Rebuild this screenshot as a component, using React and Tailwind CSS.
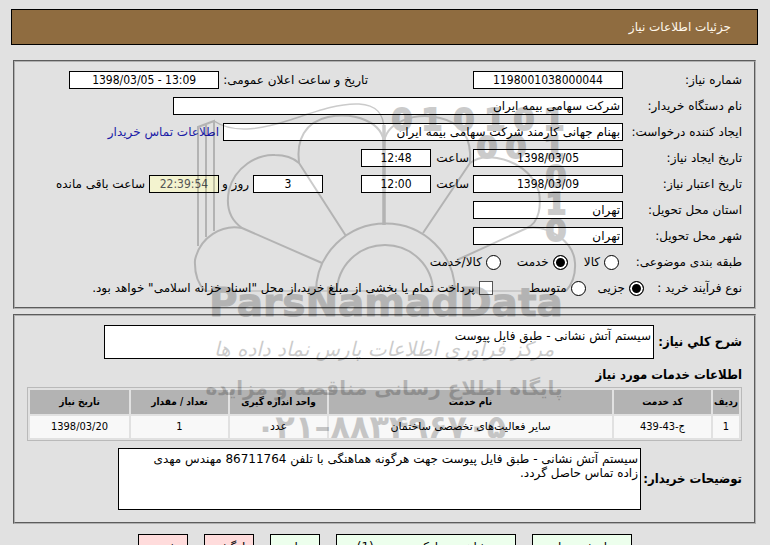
const sans = "font-['DejaVu_Sans',sans-serif]";
const condensed = "font-['DejaVu_Sans_Condensed','DejaVu_Sans',sans-serif]";

const Field = ({ id, value, className }) => (
  <input
    id={id}
    readOnly
    defaultValue={value}
    className={`h-[18px] border border-black px-0.5 ${className}`}
  />
);

// Centered field for numbers, dates and times
const NumberField = ({ id, value, className = "w-[70px] bg-white" }) => (
  <Field id={id} value={value} className={`text-center [direction:ltr] ${condensed} ${className}`} />
);

const Row = ({ id, label, children }) => (
  <div className="flex h-[18px] items-center">
    <label htmlFor={id} className="w-[119px] shrink-0 whitespace-nowrap">
      {label}
    </label>
    <div className="flex items-center gap-1 whitespace-nowrap">{children}</div>
  </div>
);

const Radio = ({ name, label, checked }) => (
  <label className="flex items-center gap-1">
    <input
      type="radio"
      name={name}
      defaultChecked={checked}
      className="size-[15px] appearance-none rounded-full border border-black bg-white checked:bg-black checked:ring-2 checked:ring-white checked:ring-inset"
    />
    {label}
  </label>
);

const services = [
  {
    row: "1",
    code: "ج-43-439",
    name: "سایر فعالیت‌های تخصصی ساختمان",
    unit: "عدد",
    count: "1",
    date: "1398/03/20",
  },
];

const actions = [
  { label: "پاسخ به نیاز", className: "w-[100px] bg-[#edffed]" },
  { label: "مشاهده مدارک پیوستی (1)", className: "w-[180px] bg-[#edffed]" },
  { label: "چاپ", className: "w-[50px] bg-[#edffed]" },
  { label: "بازگشت", className: "w-[50px] bg-[#ffdcdc]" },
  { label: "خروج", className: "w-[50px] bg-[#ffdcdc]" },
];

// Faint brand mark that lies over the whole form
const Watermark = () => (
  <svg
    viewBox="0 0 770 545"
    aria-hidden="true"
    className="pointer-events-none absolute top-0 left-1/2 h-[545px] w-[770px] -translate-x-1/2 opacity-20"
  >
    <g fill="none" stroke="black" strokeWidth="2">
      <path d="M316 292 A69 68 0 0 1 455 292" />
      <path d="M337 292 A48 47 0 0 1 433 292" />
      <path strokeWidth="3.5" d="M384 225 V125" />
      <path d="M346 236 L299 163 C296 140 305 122 328 117 C355 112 384 122 384 145" />
      <path d="M423 233 L470 163 C472 138 462 123 440 118 C415 112 384 122 384 145" />
      <path d="M322 263 L242 228 C229 219 226 205 229 190 C235 167 257 154 275 155 Q290 155 299 163" />
      <path d="M457 260 L527 228 C540 222 541 205 539 192 C533 172 515 161 497 158 Q480 155 470 163" />
      <path d="M242 228 C222 224 200 237 195 260 Q194 280 205 291" />
      <path d="M527 228 C548 225 574 241 575 263 Q576 280 566 291" />
      <path strokeWidth="1" d="M205 291 H566" />
      <path d="M198 246 V127 L214 121 V231 M206 237 V124" />
      <path strokeWidth="1.5" d="M214 121 C235 135 265 128 290 120 C320 110 340 103 359 104 C376 105 384 113 384 130" />
    </g>
    <g
      fill="black"
      stroke="black"
      strokeWidth="2"
      textAnchor="middle"
      className="font-['DejaVu_Sans',sans-serif] text-[30px] font-bold"
    >
      <text x="402" y="130">0</text>
      <text x="432" y="130">1</text>
      <text x="464" y="130">0</text>
      <text x="495" y="130">1</text>
      <text x="524" y="130">0</text>
      <text x="554" y="130">1</text>
      <text x="487" y="158">0</text>
      <text x="516" y="158">0</text>
      <text x="554" y="158">1</text>
      <text x="556" y="187">0</text>
      <text x="556" y="214">1</text>
      <text x="556" y="241">0</text>
    </g>
    <g fill="black" textAnchor="middle">
      <text
        x="386"
        y="316"
        stroke="black"
        strokeWidth="1"
        className="font-['DejaVu_Sans',sans-serif] text-[39px] font-bold"
      >
        ParsNamadData
      </text>
      <text x="384" y="356" direction="rtl" className="font-['DejaVu_Sans',sans-serif] text-[20px] italic">
        مرکز فرآوری اطلاعات پارس نماد داده ها
      </text>
      <text x="384" y="395" direction="rtl" className="font-['DejaVu_Sans',sans-serif] text-[20px] font-bold">
        پایگاه اطلاع رسانی مناقصه و مزایده
      </text>
      <text
        x="381"
        y="438"
        className="font-['DejaVu_Sans',sans-serif] text-[32px] font-bold [direction:ltr]"
      >
        ۰۲۱–۸۸۳۴۹۶۷۰۵
      </text>
    </g>
  </svg>
);

const App = () => {
  return (
    <div
      dir="rtl"
      className={`relative h-screen overflow-hidden bg-[#e1e1e1] pt-[9px] pr-3 pl-[11px] text-[12px] leading-[14px] text-black ${sans}`}
    >
      <h1 className="flex h-9 items-center border border-black bg-[#8f6c40] px-[26px] text-[#fff8ec]">
        جزئیات اطلاعات نیاز
      </h1>

      {/* Request details */}
      <fieldset className="mx-0.5 mt-[15px] flex flex-col gap-2 border-2 border-[#b0b0b0] px-3 pt-[9px] pb-2.5 [border-style:groove]">
        <Row id="number" label="شماره نیاز:">
          <NumberField id="number" value="1198001038000044" className="w-[150px] bg-white" />
          <label htmlFor="announced" className="mr-[101px]">
            تاریخ و ساعت اعلان عمومی:
          </label>
          <NumberField id="announced" value="1398/03/05 - 13:09" className="w-[150px] bg-white" />
        </Row>
        <Row id="buyer" label="نام دستگاه خریدار:">
          <Field id="buyer" value="شرکت سهامی بیمه ایران" className="w-[450px] bg-white" />
        </Row>
        <Row id="creator" label="ایجاد کننده درخواست:">
          <Field id="creator" value="بهنام جهانی کارمند شرکت سهامی بیمه ایران" className="w-[400px] bg-white" />
          <a href="#contact" className="text-[#1a1aa6]">
            اطلاعات تماس خریدار
          </a>
        </Row>
        <Row id="created" label="تاریخ ایجاد نیاز:">
          <NumberField id="created" value="1398/03/05" className="w-[150px] bg-white" />
          <label htmlFor="createdTime" className="w-[34px]">
            ساعت
          </label>
          <NumberField id="createdTime" value="12:48" />
        </Row>
        <Row id="expires" label="تاریخ اعتبار نیاز:">
          <NumberField id="expires" value="1398/03/09" className="w-[150px] bg-white" />
          <label htmlFor="expiresTime" className="w-[34px]">
            ساعت
          </label>
          <NumberField id="expiresTime" value="12:00" />
          <NumberField id="days" value="3" className="mr-[34px] w-[70px] bg-white" />
          <label htmlFor="days" className="w-[26px]">
            روز و
          </label>
          <NumberField id="remaining" value="22:39:54" className="w-[70px] bg-[#f3f3cf] text-[#555]" />
          <label htmlFor="remaining">ساعت باقی مانده</label>
        </Row>
        <Row id="province" label="استان محل تحویل:">
          <Field id="province" value="تهران" className="w-[150px] bg-white" />
        </Row>
        <Row id="city" label="شهر محل تحویل:">
          <Field id="city" value="تهران" className="w-[150px] bg-white" />
        </Row>
        <div className="flex h-[18px] items-center whitespace-nowrap">
          <span className="w-[123px] shrink-0">طبقه بندی موضوعی:</span>
          <div className="flex gap-4">
            <Radio name="category" label="کالا" />
            <Radio name="category" label="خدمت" checked />
            <Radio name="category" label="کالا/خدمت" />
          </div>
        </div>
        <div className="flex h-[18px] items-center whitespace-nowrap">
          <span className="w-[98px] shrink-0">نوع فرآیند خرید :</span>
          <div className="flex gap-3">
            <Radio name="process" label="جزیی" checked />
            <Radio name="process" label="متوسط" />
          </div>
          <label className="mr-9 flex items-center gap-1">
            <input type="checkbox" className="size-3.5 appearance-none border border-[#555] bg-white" />
            پرداخت تمام یا بخشی از مبلغ خرید،از محل "اسناد خزانه اسلامی" خواهد بود.
          </label>
        </div>
      </fieldset>

      {/* Services and notes */}
      <fieldset className="mx-0.5 mt-[5px] border-2 border-[#b0b0b0] px-3 pt-[9px] pb-3 [border-style:groove]">
        <div className="flex items-center gap-1">
          <label
            htmlFor="summary"
            className={`w-[84px] shrink-0 text-[13px] font-bold whitespace-nowrap ${condensed}`}
          >
            شرح كلي نياز:
          </label>
          <textarea
            id="summary"
            readOnly
            defaultValue="سیستم آتش نشانی - طبق فایل پیوست"
            className="h-[34px] w-[550px] resize-none overflow-hidden border border-black bg-white px-0.5 pt-[3px]"
          />
        </div>

        <h2 className={`mt-[9px] text-[13px] font-bold ${condensed}`}>اطلاعات خدمات مورد نیاز</h2>

        <table
          className={`mt-[5px] w-full table-fixed border-separate border-spacing-0.5 border border-[#b9b9b9] text-center text-[11px] ${condensed}`}
        >
          <thead className="bg-[#b3b3b3] text-[10px]">
            <tr className="h-6">
              <th className="w-[26px] p-0 whitespace-nowrap">ردیف</th>
              <th className="w-[97px]">کد خدمت</th>
              <th>نام خدمت</th>
              <th className="w-[97px]">واحد اندازه گیری</th>
              <th className="w-[97px]">تعداد / مقدار</th>
              <th className="w-[99px]">تاریخ نیاز</th>
            </tr>
          </thead>
          <tbody className="bg-[#f8f8f8]">
            {services.map((service) => (
              <tr key={service.row} className="h-[22px]">
                <td>{service.row}</td>
                <td>{service.code}</td>
                <td className={sans}>{service.name}</td>
                <td className={sans}>{service.unit}</td>
                <td>{service.count}</td>
                <td>{service.date}</td>
              </tr>
            ))}
          </tbody>
        </table>

        <div className="mt-[7px] flex items-center gap-1">
          <label
            htmlFor="notes"
            className={`w-[97px] shrink-0 text-[13px] font-bold whitespace-nowrap ${condensed}`}
          >
            توضیحات خریدار:
          </label>
          <textarea
            id="notes"
            readOnly
            defaultValue="سیستم آتش نشانی - طبق فایل پیوست جهت هرگونه هماهنگی با تلفن 86711764 مهندس مهدی زاده تماس حاصل گردد."
            className="h-[62px] w-[523px] resize-none overflow-hidden border border-black bg-white pt-[3px] pr-0.5 pl-4"
          />
        </div>
      </fieldset>

      <div className="mt-[10px] flex justify-center gap-4">
        {actions.map((action) => (
          <button
            key={action.label}
            type="button"
            className={`h-[26px] border border-black whitespace-nowrap ${action.className}`}
          >
            {action.label}
          </button>
        ))}
      </div>

      <Watermark />
    </div>
  );
};

export default App;
